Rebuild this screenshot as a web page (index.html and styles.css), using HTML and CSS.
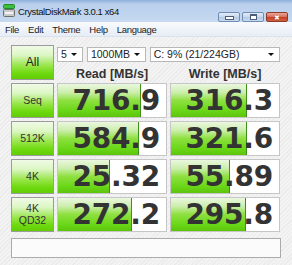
FILE: index.html
```html
<!DOCTYPE html>
<html lang="en">
<head>
    <meta charset="UTF-8">
    <title>CrystalDiskMark 3.0.1 x64</title>
    <link rel="stylesheet" href="styles.css">
</head>
<body>
    <div class="window">
        <div class="titlebar">
            <svg class="app-icon" width="12" height="13" viewBox="0 0 12 13">
                <rect x="0.5" y="0.5" width="11" height="4" rx="1" fill="#3fbf3f" stroke="#1f8a2a"/>
                <rect x="0.5" y="5.5" width="11" height="7" rx="1" fill="#c9c9c9" stroke="#6f6f6f"/>
                <rect x="2" y="8" width="8" height="2" fill="#f4f4f4"/>
            </svg>
            <span class="title">CrystalDiskMark 3.0.1 x64</span>
            <div class="caption">
                <div class="cap-btn"><span class="min-glyph"></span></div>
                <div class="cap-btn"><span class="max-glyph"></span></div>
                <div class="cap-btn close">&#x2716;</div>
            </div>
        </div>
        <div class="menubar">
            <span>File</span>
            <span>Edit</span>
            <span>Theme</span>
            <span>Help</span>
            <span>Language</span>
        </div>
        <div class="client">
            <div class="board">
                <div class="test-btn all">All</div>
                <div class="top-cell">
                    <div class="selects">
                        <div class="select count">5</div>
                        <div class="select size">1000MB</div>
                        <div class="select drive">C: 9% (21/224GB)</div>
                    </div>
                    <div class="heads">
                        <span>Read [MB/s]</span>
                        <span>Write [MB/s]</span>
                    </div>
                </div>

                <div class="test-btn">Seq</div>
                <div class="meter" style="--fill: 77.1%">716.9</div>
                <div class="meter" style="--fill: 70.0%">316.3</div>

                <div class="test-btn">512K</div>
                <div class="meter" style="--fill: 75.3%">584.9</div>
                <div class="meter" style="--fill: 70.1%">321.6</div>

                <div class="test-btn">4K</div>
                <div class="meter" style="--fill: 48.1%">25.32</div>
                <div class="meter" style="--fill: 54.9%">55.89</div>

                <div class="test-btn two-line">4K<br>QD32</div>
                <div class="meter" style="--fill: 68.7%">272.2</div>
                <div class="meter" style="--fill: 69.4%">295.8</div>
            </div>
            <div class="comment"></div>
        </div>
    </div>
</body>
</html>
```

FILE: styles.css
```css
* { box-sizing: border-box; }
body {
    margin: 0;
    font-family: 'Liberation Sans', Arial, sans-serif;
    color: #222;
}
.window {
    width: 292px;
    height: 265px;
    overflow: hidden;
    background: #f0f0f0;
}
.titlebar {
    height: 22px;
    display: flex;
    align-items: flex-start;
    padding-left: 3px;
    background: linear-gradient(to bottom, #8eaedb 0, #b9cfec 4px, #c6d9f1 100%);
}
.app-icon {
    margin-top: 4px;
    flex-shrink: 0;
}
.title {
    margin-left: 3px;
    margin-top: 6px;
    font-size: 9.5px;
    letter-spacing: -0.4px;
    color: #111;
    white-space: nowrap;
}
.caption {
    margin-left: auto;
    margin-right: 4px;
    margin-top: 12px;
    display: flex;
    gap: 2px;
}
.cap-btn {
    width: 22px;
    height: 10px;
    border: 1px solid #6f8db4;
    border-radius: 2px;
    background: linear-gradient(to bottom, #e4edf8 0%, #c5d6ec 50%, #b3c8e4 51%, #c9dbf0 100%);
    display: flex;
    align-items: center;
    justify-content: center;
}
.min-glyph {
    width: 7px;
    height: 2px;
    margin-top: 2px;
    background: #fff;
    border: 1px solid #4b5d78;
    box-sizing: content-box;
}
.max-glyph {
    width: 5px;
    height: 3px;
    border: 1px solid #4b5d78;
    border-top-width: 2px;
    background: #fff;
    box-sizing: content-box;
}
.cap-btn.close {
    border-color: #8e3b2c;
    background: linear-gradient(to bottom, #eba899 0%, #d8735f 45%, #c8412a 55%, #d0623f 100%);
    color: #fff;
    font-size: 7px;
    line-height: 1;
    text-shadow: 0 0 1px #5a1a10;
}
.menubar {
    height: 15px;
    display: flex;
    align-items: center;
    padding-left: 2px;
    font-size: 9.5px;
    letter-spacing: -0.3px;
    background: linear-gradient(to bottom, #f8fafd, #e7edf6);
    border-bottom: 1px solid #dae2ed;
}
.menubar span {
    padding: 0 3px;
    margin-right: 3px;
}
.client {
    height: 228px;
    padding: 8px 11px 0 11px;
    background: repeating-linear-gradient(135deg, #f3f3f3 0 2px, #ebebeb 2px 3px);
}
.board {
    display: grid;
    grid-template-columns: 43px 110px 110px;
    grid-template-rows: 35px 35px 35px 35px 35px;
    column-gap: 3px;
    row-gap: 3px;
}
.test-btn {
    border: 1px solid #9b9b9b;
    background: linear-gradient(to bottom, #f0fbe6 0%, #dcf6c4 28%, #9be64e 58%, #6fda10 82%, #62cc05 100%);
    display: flex;
    align-items: center;
    justify-content: center;
    text-align: center;
    font-size: 10.5px;
    color: #333;
    line-height: 1.05;
}
.test-btn.all {
    font-size: 12px;
    color: #222;
}
.top-cell {
    grid-column: 2 / 4;
    display: flex;
    flex-direction: column;
}
.selects {
    display: flex;
    gap: 4px;
    margin-top: 2px;
}
.select {
    height: 15px;
    background: #fff;
    border: 1px solid #b8b8b8;
    font-size: 10.5px;
    line-height: 13px;
    padding-left: 3px;
    position: relative;
    white-space: nowrap;
}
.select::after {
    content: '';
    position: absolute;
    right: 5px;
    top: 5px;
    border-left: 3px solid transparent;
    border-right: 3px solid transparent;
    border-top: 3px solid #111;
}
.select.count { width: 26px; }
.select.size { width: 59px; }
.select.drive { width: 131px; }
.heads {
    display: grid;
    grid-template-columns: 110px 110px;
    column-gap: 3px;
    margin-top: 5px;
}
.heads span {
    text-align: center;
    font-size: 12.5px;
    font-weight: bold;
    color: #333;
}
.meter {
    border: 1px solid #c6c6c6;
    background-color: #fff;
    background-image:
        linear-gradient(to right, transparent calc(var(--fill) - 1px), #3e8f1c calc(var(--fill) - 1px), #3e8f1c var(--fill), transparent var(--fill)),
        linear-gradient(to bottom, #eaf7df 0%, #cdeeae 25%, #8ee040 50%, #6ad718 80%, #5cc40c 100%);
    background-size: 100% 100%, var(--fill) 100%;
    background-repeat: no-repeat;
    display: flex;
    align-items: center;
    justify-content: flex-end;
    padding-right: 6px;
    font-family: 'DejaVu Sans', sans-serif;
    font-weight: bold;
    font-size: 28px;
    color: #333;
    letter-spacing: -0.2px;
}
.comment {
    margin-top: 6px;
    width: 270px;
    height: 20px;
    background: #fbfbfb;
    border: 1px solid #ababab;
}
```
